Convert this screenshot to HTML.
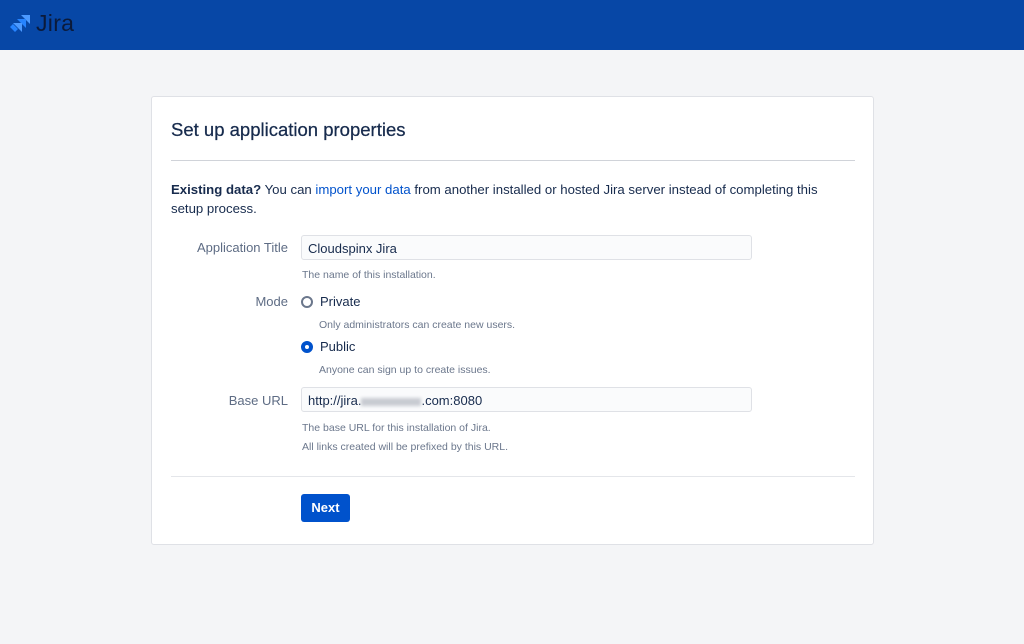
<!DOCTYPE html>
<html><head><meta charset="utf-8"><style>
body{margin:0;width:1024px;height:644px;background:#f4f5f7;font-family:"Liberation Sans",sans-serif;color:#172b4d;position:relative;overflow:hidden}
.hdr{position:absolute;left:0;top:0;width:1024px;height:50px;background:#0747a6}
.logo{position:absolute;left:36px;top:10px;font-size:23px;color:#0b1a3a;letter-spacing:0.3px}
.card{position:absolute;left:151px;top:96px;width:721px;height:447px;background:#fff;border:1px solid #dfe1e6;border-radius:3px}
h1{position:absolute;left:19px;top:22px;margin:0;font-size:18.5px;font-weight:normal;color:#172b4d;-webkit-text-stroke:0.25px #172b4d}
.hr{position:absolute;left:19px;width:684px;height:1px;background:#d0d3d9}
.p{position:absolute;left:19px;top:83px;width:670px;font-size:13.2px;line-height:19px}
a{color:#0052cc;text-decoration:none}
.lbl{position:absolute;right:585px;font-size:13px;color:#5e6c84;text-align:right;white-space:nowrap}
.inp{position:absolute;left:149px;height:25px;border:1px solid #dfe1e6;border-radius:3px;background:#fafbfc;font-size:13px;line-height:25px;padding-left:6px;box-sizing:border-box;width:451px}
.desc{position:absolute;left:150px;font-size:10.5px;color:#6b778c}
.rad{position:absolute;left:149px;width:12px;height:12px;border-radius:50%;box-sizing:border-box}
.rt{position:absolute;left:168px;font-size:13px}
.btn{position:absolute;left:149px;top:397px;width:49px;height:28px;background:#0052cc;border-radius:3px;color:#fff;font-weight:bold;font-size:13px;text-align:center;line-height:28px}
</style></head><body>
<div class="hdr">
<svg style="position:absolute;left:8px;top:13px" width="24" height="24" viewBox="0 0 24 24">
<path d="M13 2h9v9l-4-4z" fill="#4c9aff"/><path d="M9 6h9v9l-4-4z" fill="#2684ff"/><path d="M5 10h9v9l-4-4z" fill="#4c9aff"/><path d="M2 14l3-3 5 5-3 3z" fill="#2684ff"/>
</svg>
<div class="logo">Jira</div>
</div>
<div class="card">
<h1>Set up application properties</h1>
<div class="hr" style="top:63px"></div>
<div class="p"><b>Existing data?</b> You can <a>import your data</a> from another installed or hosted Jira server instead of completing this setup process.</div>
<div class="lbl" style="top:143px">Application Title</div>
<div class="inp" style="top:138px">Cloudspinx Jira</div>
<div class="desc" style="top:172px">The name of this installation.</div>
<div class="lbl" style="top:197px">Mode</div>
<div class="rad" style="top:199px;border:2px solid #6b778c"></div>
<div class="rt" style="top:197px">Private</div>
<div class="desc" style="left:167px;top:222px">Only administrators can create new users.</div>
<div class="rad" style="top:244px;border:4px solid #0052cc"></div>
<div class="rt" style="top:242px">Public</div>
<div class="desc" style="left:167px;top:267px">Anyone can sign up to create issues.</div>
<div class="lbl" style="top:296px">Base URL</div>
<div class="inp" style="top:290px">http://jira.<span style="display:inline-block;width:60px;height:8px;background:#c8cbd2;filter:blur(1.5px);vertical-align:middle"></span>.com:8080</div>
<div class="desc" style="top:325px">The base URL for this installation of Jira.</div>
<div class="desc" style="top:344px">All links created will be prefixed by this URL.</div>
<div class="hr" style="top:379px;background:#e4e6ea"></div>
<div class="btn">Next</div>
</div>
</body></html>
